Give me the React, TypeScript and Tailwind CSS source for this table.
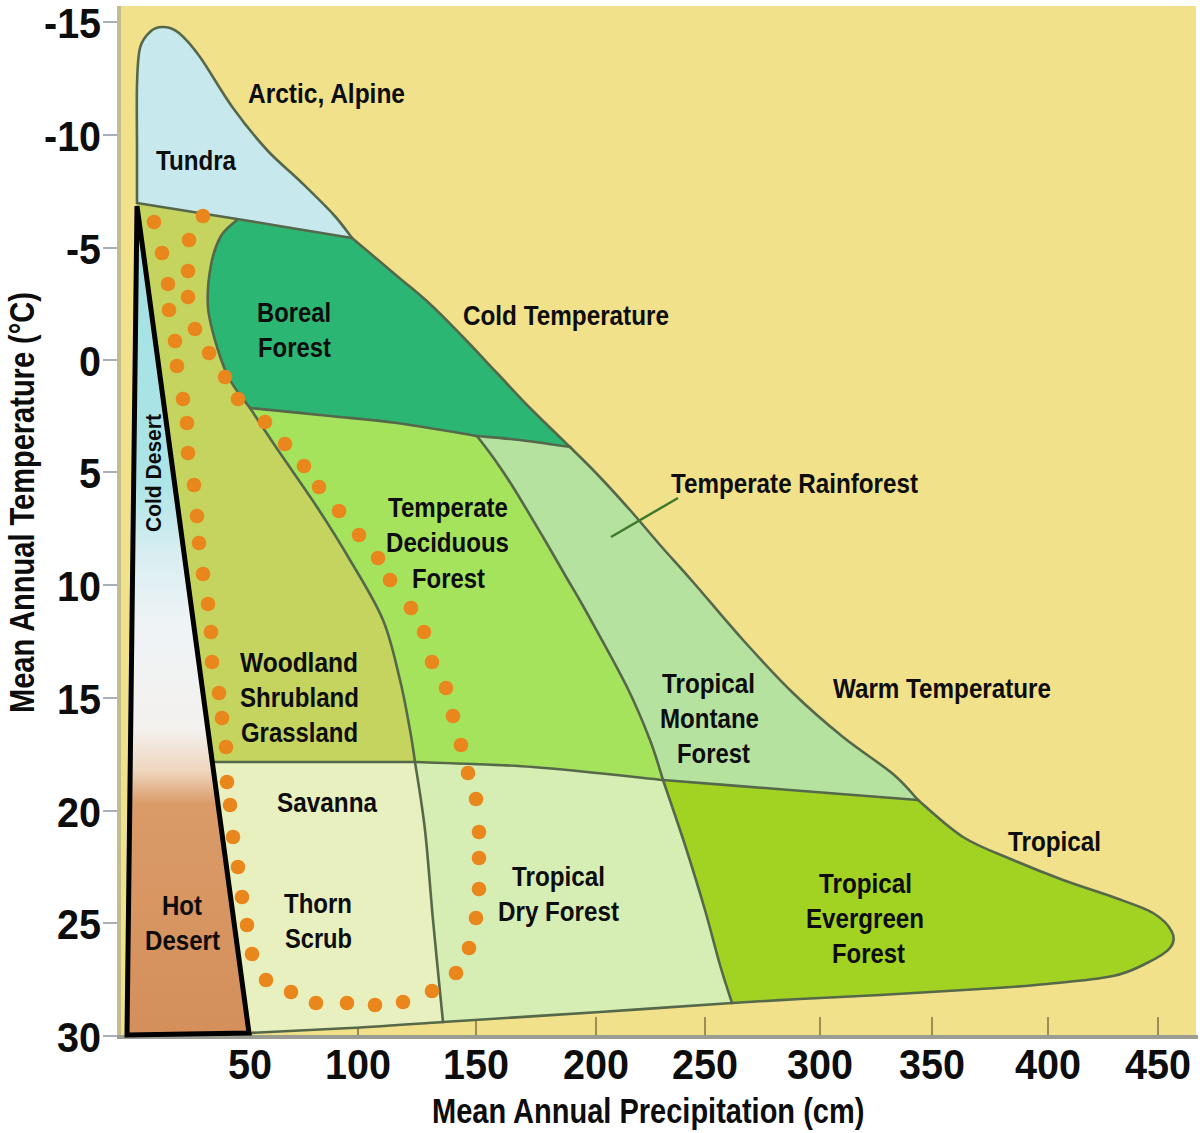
import React from "react";

type P = [number, number];

const FONT = "'Liberation Sans', Arial, sans-serif";

// catmull-rom through the points, as cubic segments (current point = pts[0])
function curve(pts: P[]): string {
  let d = "";
  for (let i = 0; i < pts.length - 1; i++) {
    const p0 = pts[i - 1] || pts[i];
    const p1 = pts[i];
    const p2 = pts[i + 1];
    const p3 = pts[i + 2] || p2;
    const c1 = [p1[0] + (p2[0] - p0[0]) / 6, p1[1] + (p2[1] - p0[1]) / 6].map((v) => v.toFixed(1));
    const c2 = [p2[0] - (p3[0] - p1[0]) / 6, p2[1] - (p3[1] - p1[1]) / 6].map((v) => v.toFixed(1));
    d += ` C${c1} ${c2} ${p2}`;
  }
  return d;
}
const rev = (p: P[]): P[] => [...p].reverse();
const region = (...segs: P[][]) => {
  let d = `M${segs[0][0]}`;
  for (const s of segs) d += ` L${s[0]}` + curve(s);
  return d + " Z";
};
const stroke = (s: P[]) => `M${s[0]}` + curve(s);

// boundaries
const A: P[] = [[137, 203], [137, 150], [137, 85], [140, 48], [151, 31], [164, 27], [179, 33], [200, 57], [233, 108], [267, 150], [300, 181], [333, 214], [352, 238]];
const B: P[] = [[137, 203], [237, 219], [352, 238]];
const C: P[] = [[352, 238], [397, 276], [430, 304], [463, 337], [497, 373], [530, 408], [570, 447]];
const D: P[] = [[570, 447], [597, 474], [630, 510], [660, 545], [693, 582], [743, 640], [793, 693], [843, 737], [893, 774], [918, 800]];
const E: P[] = [[918, 800], [963, 837], [1013, 860], [1063, 880], [1113, 897], [1153, 913], [1172, 932], [1170, 948], [1147, 963], [1113, 976], [1047, 984], [980, 989], [880, 995], [800, 999], [732, 1003]];
const F: P[] = [[732, 1003], [600, 1012], [443, 1022]];
const G: P[] = [[443, 1022], [350, 1028], [248, 1033]];
const BT: P[] = [[237, 220], [295, 229], [352, 238]];
const BL: P[] = [[237, 220], [221, 236], [211, 265], [208, 307], [217, 347], [230, 380], [250, 408]];
const BB1: P[] = [[250, 408], [330, 416], [397, 423], [477, 436]];
const BB2: P[] = [[477, 436], [520, 440], [570, 447]];
const WD: P[] = [[250, 408], [280, 453], [317, 507], [350, 560], [383, 620], [400, 680], [410, 730], [415, 762]];
const RD: P[] = [[477, 436], [495, 460], [513, 487], [543, 537], [565, 575], [587, 613], [627, 687], [650, 740], [663, 780]];
const H1: P[] = [[212, 762], [415, 762]];
const H2: P[] = [[415, 762], [533, 767], [663, 780]];
const H3: P[] = [[663, 780], [790, 790], [918, 800]];
const SD: P[] = [[415, 762], [425, 830], [433, 920], [443, 1022]];
const DE: P[] = [[663, 780], [685, 845], [705, 910], [720, 965], [732, 1003]];

const regions = [
  { fill: "#c7e9ed", d: region(A, rev(B)) },
  { fill: "#c4d45e", d: region(B, C, rev(BB2), rev(BB1), WD, rev(H1)) },
  { fill: "#2bb673", d: region(BT, C, rev(BB2), rev(BB1), rev(BL)) },
  { fill: "#a6e35d", d: region(BB1, RD, rev(H2), rev(WD)) },
  { fill: "#b6e2a0", d: region(BB2, D, rev(H3), rev(RD)) },
  { fill: "#e9f0bf", d: region(H1, SD, G) },
  { fill: "#d6eeb3", d: region(H2, DE, F, rev(SD)) },
  { fill: "#a3d322", d: region(H3, E, rev(DE)) },
];

const lines = [A, B, C, D, E, F, G, BL, BB1, BB2, WD, RD, H1, H2, H3, SD, DE];

const dots: P[] = [
  [154, 222], [162, 253], [168, 284], [169, 310], [175, 341], [177, 366], [183, 399], [187, 423], [188, 453], [194, 485],
  [197, 516], [199, 543], [203, 574], [208, 604], [211, 632], [212, 662], [219, 693], [222, 718], [226, 747], [227, 782],
  [230, 805], [233, 837], [238, 867], [242, 897], [247, 925], [252, 954], [266, 980], [291, 992], [316, 1003], [347, 1003],
  [375, 1005], [403, 1002], [432, 991], [456, 973], [469, 948], [476, 918], [479, 889], [479, 858], [479, 832], [476, 799],
  [468, 773], [461, 745], [453, 716], [446, 688], [432, 662], [424, 632], [411, 608], [390, 580], [378, 558], [359, 535],
  [339, 511], [319, 487], [304, 466], [285, 444], [265, 422], [238, 399], [225, 377], [209, 353], [195, 329], [188, 297],
  [188, 271], [189, 240], [203, 216],
];

const labels: { t: string; x: number; y: number; w: number }[] = [
  { t: "Arctic, Alpine", x: 248, y: 103, w: 157 },
  { t: "Tundra", x: 156, y: 170, w: 80 },
  { t: "Boreal", x: 257, y: 322, w: 74 },
  { t: "Forest", x: 258, y: 357, w: 73 },
  { t: "Cold Temperature", x: 463, y: 325, w: 206 },
  { t: "Temperate Rainforest", x: 671, y: 493, w: 247 },
  { t: "Temperate", x: 388, y: 517, w: 120 },
  { t: "Deciduous", x: 386, y: 552, w: 123 },
  { t: "Forest", x: 412, y: 588, w: 73 },
  { t: "Woodland", x: 240, y: 672, w: 118 },
  { t: "Shrubland", x: 240, y: 707, w: 119 },
  { t: "Grassland", x: 241, y: 742, w: 117 },
  { t: "Tropical", x: 662, y: 693, w: 93 },
  { t: "Montane", x: 660, y: 728, w: 99 },
  { t: "Forest", x: 677, y: 763, w: 73 },
  { t: "Warm Temperature", x: 833, y: 698, w: 218 },
  { t: "Savanna", x: 277, y: 812, w: 100 },
  { t: "Tropical", x: 1008, y: 851, w: 93 },
  { t: "Tropical", x: 512, y: 886, w: 93 },
  { t: "Dry Forest", x: 498, y: 921, w: 121 },
  { t: "Thorn", x: 284, y: 913, w: 68 },
  { t: "Scrub", x: 285, y: 948, w: 67 },
  { t: "Hot", x: 162, y: 915, w: 40 },
  { t: "Desert", x: 145, y: 950, w: 75 },
  { t: "Tropical", x: 819, y: 893, w: 93 },
  { t: "Evergreen", x: 806, y: 928, w: 118 },
  { t: "Forest", x: 832, y: 963, w: 73 },
];

const yTicks = [
  { v: "-15", y: 22 }, { v: "-10", y: 135 }, { v: "-5", y: 248 }, { v: "0", y: 360 },
  { v: "5", y: 472 }, { v: "10", y: 585 }, { v: "15", y: 698 }, { v: "20", y: 811 },
  { v: "25", y: 923 }, { v: "30", y: 1036 },
];
const xTicks = [
  { v: "50", x: 250 }, { v: "100", x: 358 }, { v: "150", x: 476 }, { v: "200", x: 596 }, { v: "250", x: 705 },
  { v: "300", x: 820 }, { v: "350", x: 932 }, { v: "400", x: 1048 }, { v: "450", x: 1158 },
];

// advance width of a tick number, squeezed a little
const numWidth = (s: string) => s.split("").reduce((w, c) => w + (c === "-" ? 13 : 22), 0);

function BiomeChart() {
  return (
    <svg width={1156} height={1090} viewBox="44 0 1156 1090" className="block">
      <defs>
        <linearGradient id="desert" gradientUnits="userSpaceOnUse" x1="0" y1="207" x2="0" y2="1036">
          <stop offset="0" stopColor="#a3e1e3" />
          <stop offset="0.33" stopColor="#ace4e7" />
          <stop offset="0.42" stopColor="#d9eef1" />
          <stop offset="0.5" stopColor="#eef3f6" />
          <stop offset="0.63" stopColor="#f4f1ee" />
          <stop offset="0.68" stopColor="#efd6bf" />
          <stop offset="0.72" stopColor="#da9b68" />
          <stop offset="1" stopColor="#d48f5b" />
        </linearGradient>
      </defs>

      {/* plot background */}
      <rect x={120} y={6} width={1076} height={1030} fill="#f1e18a" />
      <rect x={117} y={6} width={4} height={1030} fill="#c2bd8c" />
      <line x1={117} y1={1037} x2={1198} y2={1037} stroke="#9c9d92" strokeWidth={4} />

      {yTicks.map((t) => (
        <line key={t.v} x1={103} y1={t.y} x2={117} y2={t.y} stroke="#a7afb8" strokeWidth={2} />
      ))}
      {xTicks.slice(1).map((t) => (
        <line key={t.v} x1={t.x} y1={1017} x2={t.x} y2={1035} stroke="#7f7046" strokeWidth={1.5} />
      ))}

      {regions.map((r, i) => (
        <path key={i} d={r.d} fill={r.fill} />
      ))}
      {lines.map((l, i) => (
        <path key={i} d={stroke(l)} fill="none" stroke="#55684a" strokeWidth={2.6} strokeLinecap="round" />
      ))}

      {/* leader for the rainforest label */}
      <line x1={678} y1={498} x2={611} y2={537} stroke="#3e7a2c" strokeWidth={2.5} />

      {dots.map((p, i) => (
        <circle key={i} cx={p[0]} cy={p[1]} r={7.3} fill="#e9861c" />
      ))}

      {/* desert wedge */}
      <polygon points="137,206 127,1035 249,1033" fill="url(#desert)" stroke="#000" strokeWidth={5} strokeLinejoin="miter" />

      <g fontFamily={FONT} fontWeight={700} fill="#0d0d0d">
        {labels.map((l, i) => (
          <text key={i} x={l.x} y={l.y} fontSize={28} textLength={l.w} lengthAdjust="spacingAndGlyphs">
            {l.t}
          </text>
        ))}
        <text transform="translate(161,473) rotate(-90)" textAnchor="middle" fontSize={22} textLength={118} lengthAdjust="spacingAndGlyphs">
          Cold Desert
        </text>

        {yTicks.map((t) => (
          <text key={t.v} x={101} y={t.y + 16} textAnchor="end" fontSize={42} textLength={numWidth(t.v)} lengthAdjust="spacingAndGlyphs">
            {t.v}
          </text>
        ))}
        {xTicks.map((t) => (
          <text key={t.v} x={t.x} y={1079} textAnchor="middle" fontSize={42} textLength={numWidth(t.v)} lengthAdjust="spacingAndGlyphs">
            {t.v}
          </text>
        ))}
      </g>
    </svg>
  );
}

export default function App() {
  return (
    <div className="flex h-[1133px] w-[1200px] bg-white font-bold text-[#0d0d0d] font-['Liberation_Sans',Arial,sans-serif]">
      {/* y axis title */}
      <div className="flex h-[1090px] w-[44px] shrink-0 items-center justify-center pb-[86px]">
        <span className="-rotate-90 scale-y-[1.2] whitespace-nowrap text-[29px] leading-none">
          Mean Annual Temperature (°C)
        </span>
      </div>

      <div className="flex flex-col">
        <BiomeChart />
        {/* x axis title */}
        <div className="flex h-[43px] items-center pl-[388px]">
          <span className="scale-y-[1.2] whitespace-nowrap text-[29px] leading-none">
            Mean Annual Precipitation (cm)
          </span>
        </div>
      </div>
    </div>
  );
}
